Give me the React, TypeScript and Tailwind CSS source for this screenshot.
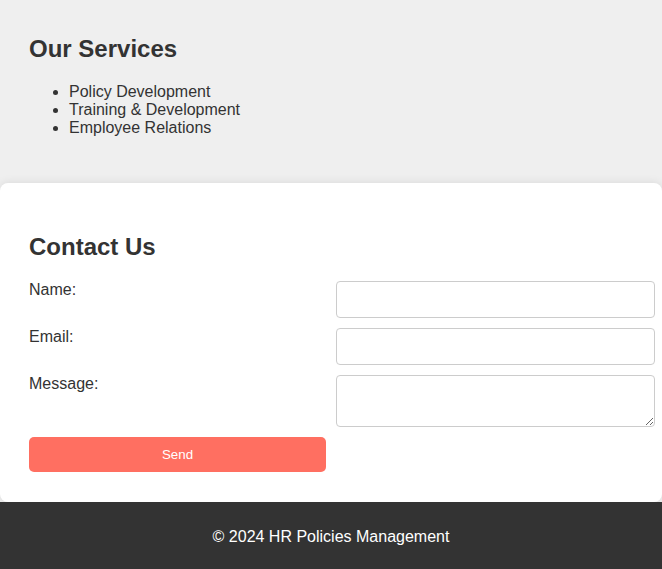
import React from 'react';

const services = ['Policy Development', 'Training & Development', 'Employee Relations'];

const App: React.FC = () => {
  return (
    <div className="min-h-[569px] bg-[#efefef] text-[#333] font-['Liberation_Sans',Arial,sans-serif]">
      <section className="px-[29px] pt-[35px] pb-[46px]">
        <h2 className="text-[24px] leading-[28px] font-bold">Our Services</h2>
        <ul className="mt-[20px] list-disc pl-10 text-[16px] leading-[18px]">
          {services.map((s) => (
            <li key={s}>{s}</li>
          ))}
        </ul>
      </section>

      <section className="bg-white rounded-[8px] shadow-[0_0_10px_rgba(0,0,0,0.1)] px-[29px] pt-[50px] pb-[30px]">
        <h2 className="text-[24px] leading-[28px] font-bold">Contact Us</h2>
        <form
          className="mt-[20px] grid grid-cols-[297px_319px] gap-[10px] text-[16px] leading-[18px]"
          onSubmit={(e) => e.preventDefault()}
        >
          <label htmlFor="name">Name:</label>
          <input id="name" type="text" className="h-[37px] rounded-[4px] border border-[#ccc] px-[10px] bg-white" />

          <label htmlFor="email">Email:</label>
          <input id="email" type="email" className="h-[37px] rounded-[4px] border border-[#ccc] px-[10px] bg-white" />

          <label htmlFor="message">Message:</label>
          <textarea id="message" className="h-[52px] rounded-[4px] border border-[#ccc] px-[10px] bg-white resize-y" />

          <button
            type="submit"
            className="h-[35px] rounded-[5px] bg-[#ff6f61] text-white text-[13.33px]"
          >
            Send
          </button>
        </form>
      </section>

      <footer className="bg-[#333] text-white text-center text-[16px] leading-[18px] pt-[26px] pb-[23px]">
        © 2024 HR Policies Management
      </footer>
    </div>
  );
};

export default App;
